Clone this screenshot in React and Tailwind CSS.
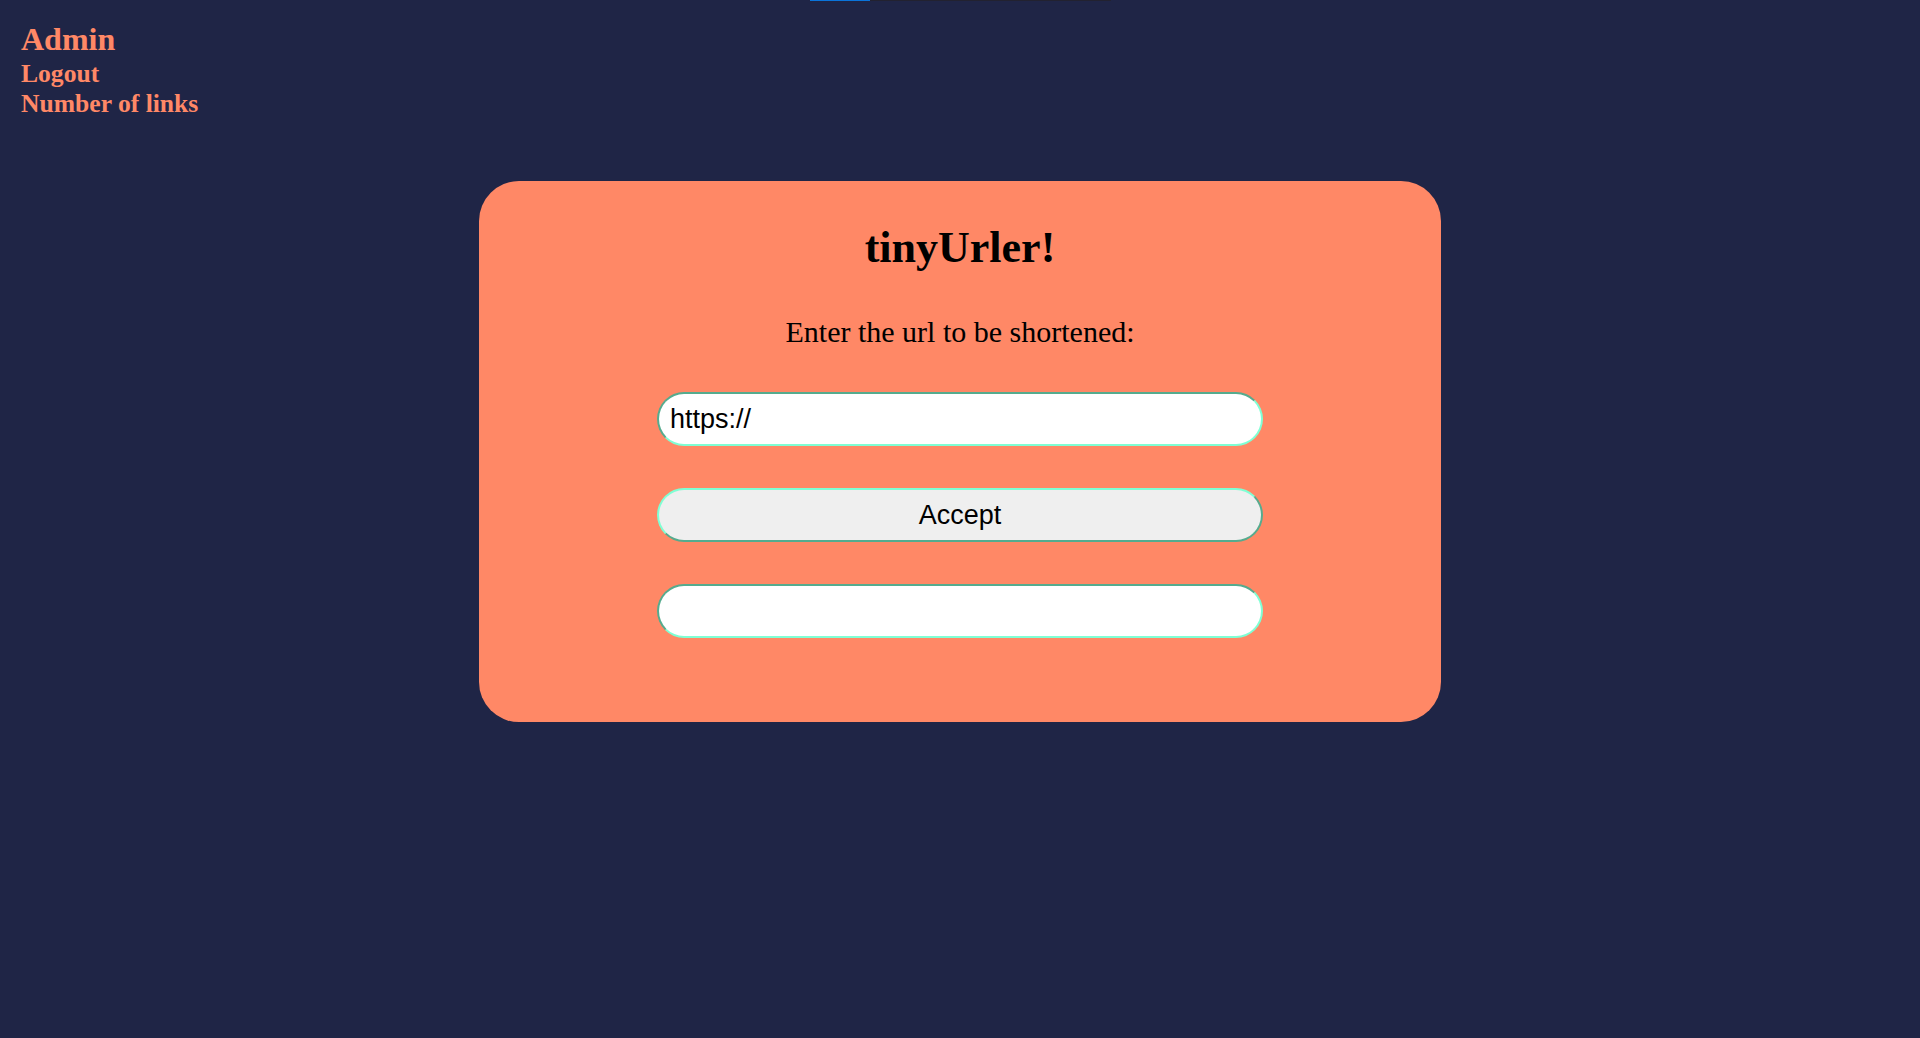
import React, { useState } from 'react';

// Top-of-page loader strip (thin 1px line, partially filled)
function LoadStrip() {
  return (
    <div className="flex justify-center h-px">
      <div className="flex w-[301px] h-px bg-[#222230]">
        <div className="w-[60px] h-px bg-[#0a74da]" />
      </div>
    </div>
  );
}

function Nav() {
  return (
    <nav className="pl-[21px] pt-[20px] font-['Liberation_Serif',serif] font-bold text-[#ff8866]">
      <h1 className="text-[32px] leading-[37px]">Admin</h1>
      <a href="#" className="block text-[25.6px] leading-[30px] mt-px">Logout</a>
      <a href="#" className="block text-[25.6px] leading-[30px]">Number of links</a>
    </nav>
  );
}

export default function App() {
  const [url, setUrl] = useState('https://');
  const [shortUrl, setShortUrl] = useState('');

  const handleAccept = () => {
    if (!url || url === 'https://') return;
    setShortUrl('');
  };

  return (
    <div className="min-h-screen w-full bg-[#1f2546]">
      <LoadStrip />
      <Nav />
      <div className="flex justify-center mt-[62px]">
        <div className="w-[962px] h-[541px] rounded-[40px] bg-[#ff8866] flex flex-col items-center pt-[42px] font-['Liberation_Serif',serif] text-black">
          <h2 className="text-[44px] leading-[50px] font-bold">tinyUrler!</h2>
          <p className="mt-[42px] text-[30px] leading-[34px]">Enter the url to be shortened:</p>
          <input
            value={url}
            onChange={(e) => setUrl(e.target.value)}
            className="mt-[43px] w-[606px] h-[54px] rounded-full bg-white border-2 border-[#7fffd4] [border-style:inset] px-[11px] text-[27px] font-['Liberation_Sans',Arial,sans-serif] text-black outline-none"
          />
          <button
            onClick={handleAccept}
            className="mt-[42px] w-[606px] h-[54px] rounded-full bg-[#efefef] border-2 border-[#7fffd4] [border-style:outset] text-[27px] font-['Liberation_Sans',Arial,sans-serif] text-black"
          >
            Accept
          </button>
          <input
            value={shortUrl}
            readOnly
            className="mt-[42px] w-[606px] h-[54px] rounded-full bg-white border-2 border-[#7fffd4] [border-style:inset] px-[11px] text-[27px] font-['Liberation_Sans',Arial,sans-serif] text-black outline-none"
          />
        </div>
      </div>
    </div>
  );
}
